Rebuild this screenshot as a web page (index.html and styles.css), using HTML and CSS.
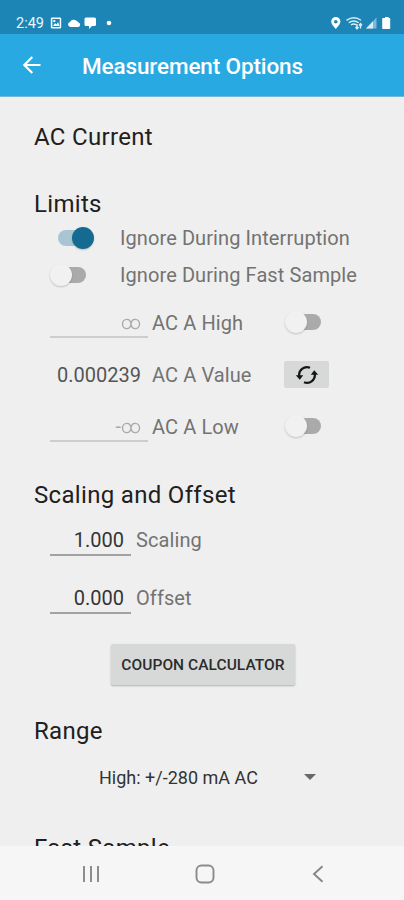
FILE: index.html
```html
<!DOCTYPE html>
<html lang="en">
<head>
<meta charset="utf-8">
<title>Measurement Options</title>
<link rel="stylesheet" href="styles.css">
</head>
<body>
<div class="status">
  <span class="time">2:49</span>
  <svg class="status-left" width="64" height="14" viewBox="0 0 64 14">
    <path fill="#f4fbff" fill-rule="evenodd" d="M2 1.500h8q1.200 0 1.200 1.200v8.600q0 1.200-1.200 1.200H2q-1.200 0-1.200-1.200V2.700Q.8 1.500 2 1.500zM2.400 3v8h7.300V3z"/>
    <path fill="#f4fbff" d="M3 10l2-3 1.500 1.600L8 6l1.500 4zM3.300 4h2v2h-2z"/>
    <path fill="#fff" d="M20.500 11a2.500 2.500 0 0 1-.6-4.900 4 4 0 0 1 6.700-1 3 3 0 0 1 1.900 1.500 2.300 2.300 0 0 1 0 4.400z"/>
    <path fill="#fff" d="M36 1.500h8.500q1.500 0 1.500 1.500v5.500q0 1.500-1.500 1.500H42l-3 3v-3h-3q-1.500 0-1.500-1.500V3q0-1.500 1.500-1.500z"/>
    <circle cx="59" cy="7" r="2.300" fill="#fff"/>
  </svg>
  <svg class="status-right" width="62" height="14" viewBox="0 0 62 14">
    <path fill="#fff" fill-rule="evenodd" d="M5.800 1a4.600 4.600 0 0 1 4.600 4.600c0 3-4.600 7.400-4.600 7.400S1.200 8.600 1.200 5.600A4.600 4.600 0 0 1 5.800 1zm0 2.900a1.800 1.800 0 1 0 0 3.600 1.800 1.800 0 0 0 0-3.600z"/>
    <g fill="none" stroke="#d8edf7" stroke-width="1.400">
      <path d="M16.500 4.300q7.500-5.200 14.500 0M18.700 6.700q5-3.500 10 0M21 9q2.800-2 5.500 0"/>
      <path d="M27 8v4.500M25.500 11l1.500 1.800 1.500-1.800M30.500 12.500V8M29 9.500l1.500-1.800L32 9.500"/>
    </g>
    <path fill="#7db9d8" d="M46.500 1.500v11H36z"/>
    <path fill="#d8edf7" d="M43 5.200v7.300h-7z"/>
    <path fill="#fff" d="M54 2h1V1h3.600v1h.8q.8 0 .8.800v9.400q0 .8-.8.800H53q-.8 0-.8-.8V2.800q0-.8.800-.8z"/>
  </svg>
</div>
<header class="bar">
  <svg width="20" height="20" viewBox="0 0 20 20"><path d="M18.500 10H3M10.300 2L2.300 10l8 8" fill="none" stroke="#fff" stroke-width="2.200"/></svg>
  <h1>Measurement Options</h1>
</header>
<main class="content">
  <h2 class="first">AC Current</h2>
  <h2 class="limits">Limits</h2>
  <div class="option"><i class="switch on"></i><span class="label">Ignore During Interruption</span></div>
  <div class="option second"><i class="switch"></i><span class="label">Ignore During Fast Sample</span></div>
  <div class="reading high"><span class="field hint"><svg width="20" height="12" viewBox="0 0 20 12"><path d="M10 6C9.600 2.800 8 1.400 5.800 1.400 3.300 1.400 1.500 3.400 1.500 6s1.800 4.600 4.300 4.600C8 10.600 9.600 9.200 10 6s2-4.600 4.200-4.600c2.500 0 4.300 2 4.300 4.600s-1.800 4.600-4.300 4.600C12 10.600 10.400 9.200 10 6z"/></svg></span><span class="label">AC A High</span><i class="switch"></i></div>
  <div class="reading"><span class="field value">0.000239</span><span class="label">AC A Value</span>
    <button class="refresh" aria-label="Refresh"><svg width="24" height="20" viewBox="0 0 24 20"><g fill="none" stroke="#151515" stroke-width="2.200"><path d="M4.300 11.500A7.800 7.800 0 0 1 15 2.800"/><path d="M19.700 8.500A7.800 7.800 0 0 1 9 17.200"/></g><path d="M.8 10.300h7.400l-3.400 4.500zM15.800 9.700h7.400l-4-4.500z" fill="#151515"/></svg></button></div>
  <div class="reading"><span class="field hint">-<svg width="20" height="12" viewBox="0 0 20 12"><path d="M10 6C9.600 2.800 8 1.400 5.800 1.400 3.300 1.400 1.500 3.400 1.500 6s1.800 4.600 4.300 4.600C8 10.600 9.600 9.200 10 6s2-4.600 4.200-4.600c2.500 0 4.300 2 4.300 4.600s-1.800 4.600-4.300 4.600C12 10.600 10.400 9.200 10 6z"/></svg></span><span class="label">AC A Low</span><i class="switch"></i></div>
  <h2 class="scaling">Scaling and Offset</h2>
  <div class="entry"><span class="field">1.000</span><span class="label">Scaling</span></div>
  <div class="entry offset"><span class="field">0.000</span><span class="label">Offset</span></div>
  <button class="coupon">COUPON CALCULATOR</button>
  <h2 class="range">Range</h2>
  <div class="select"><span>High: +/-280 mA AC</span><i class="caret"></i></div>
  <h2 class="fast">Fast Sample</h2>
</main>
<nav class="nav">
  <svg width="18" height="18" viewBox="0 0 18 18"><path d="M2 1v16M9 1v16M16 1v16" stroke="#8d8d8d" stroke-width="2"/></svg>
  <svg class="home" width="20" height="20" viewBox="0 0 20 20"><rect x="1.500" y="1.500" width="17" height="17" rx="5" fill="none" stroke="#8b8b8b" stroke-width="1.900"/></svg>
  <svg width="12" height="18" viewBox="0 0 12 18"><path d="M10.500 1.200L2 9l8.500 7.800" fill="none" stroke="#858585" stroke-width="1.900"/></svg>
</nav>
</body>
</html>
```
FILE: styles.css
```css
* { box-sizing: border-box; }
body {
  margin: 0;
  height: 900px;
  overflow: hidden;
  display: flex;
  flex-direction: column;
  background: #efefef;
  font-family: Roboto, sans-serif;
}
svg { display: block; flex: none; }
.status {
  height: 34px;
  flex: none;
  padding: 12px 12px 0 16px;
  display: flex;
  background: #1c85b5;
}
.time { width: 34px; color: #e9f6fc; font-size: 14.5px; line-height: 23px; }
.status-left { margin-top: 4px; }
.status-right { margin: 4px 0 0 auto; }
.bar {
  height: 63px;
  flex: none;
  padding-left: 22px;
  display: flex;
  align-items: center;
  gap: 40px;
  background: #29a9e1;
  border-bottom: 1px solid #74b8d7;
}
h1 { margin: 2px 0 0; color: #fff; font-size: 22.500px; font-weight: 500; line-height: 30px; letter-spacing: -.12px; }
.content { flex: 1; min-height: 0; overflow: hidden; display: flex; flex-direction: column; }
.content > * { flex: none; }
h2 { margin: 0 0 0 34px; height: 32px; line-height: 32px; font-size: 24px; font-weight: 400; letter-spacing: .32px; color: #202020; }
.first { margin-top: 24px; }
.limits { margin-top: 35px; }
.option { height: 36px; padding-left: 50px; display: flex; align-items: center; }
.option .label { margin-left: 27px; }
.second { margin-top: 1px; }
.label { color: #737373; font-size: 20px; line-height: 30px; white-space: nowrap; letter-spacing: .09px; }
.switch { position: relative; width: 43px; height: 24px; flex: none; }
.switch::before { content: ""; position: absolute; left: 8px; top: 4px; width: 28px; height: 16px; border-radius: 8px; background: #aaa; }
.switch::after { content: ""; position: absolute; left: 0; top: 1px; width: 22px; height: 22px; border-radius: 50%; background: #f1f1f1; box-shadow: 0 1px 2px #0003; }
.switch.on::before { background: #a9c5d4; }
.switch.on::after { left: 22px; background: #146a91; }
.reading { height: 30px; margin-top: 22px; padding-left: 50px; display: grid; grid-template-columns: 98px 136px 45px; grid-template-rows: 30px; align-items: center; }
.high { margin-top: 15px; }
.reading .label { margin-left: 4px; }
.reading .switch { margin-left: 1px; margin-top: -2px; }
.field { height: 30px; line-height: 30px; padding-right: 7px; display: flex; justify-content: flex-end; align-items: center; font-size: 20px; color: #343434; border-bottom: 2px solid #a2a2a2; letter-spacing: 0; }
.hint { color: #aaa; border-color: #cdcdcd; }
.hint svg { margin-top: 3px; }
.hint path { fill: none; stroke: #aaa; stroke-width: 1.400; }
.value { color: #555; border: 0; }
.refresh { width: 45px; height: 27px; margin-top: -1px; padding: 0; border: 0; border-radius: 2px; display: flex; align-items: center; justify-content: center; background: #d6d9d8; }
.scaling { margin-top: 37px; }
.entry { margin-top: 14px; height: 30px; padding-left: 50px; display: flex; gap: 5px; align-items: center; }
.entry .field { width: 81px; height: 31px; line-height: 28px; padding-top: 2px; }
.offset { margin-top: 28px; }
.coupon { width: 184px; height: 41px; margin: 31px 0 0 111px; padding: 0; border: 0; border-radius: 2px; background: #d6d9d8; box-shadow: 0 1px 2px #0004; font: 500 15.500px/42px Roboto, sans-serif; letter-spacing: .05px; color: #2b2b2b; white-space: nowrap; }
.range { margin-top: 30px; }
.select { margin: 15px 0 0 99px; width: 217px; height: 30px; display: flex; align-items: center; justify-content: space-between; color: #333; font-size: 18px; }
.caret { border: 6px solid transparent; border-top-color: #686868; border-bottom: 0; }
.fast { margin-top: 40px; }
.nav { height: 54px; flex: none; padding: 2px 80px 0 82px; display: flex; align-items: center; justify-content: space-between; background: #f6f6f6; }
.home { margin-right: 3px; }
```
